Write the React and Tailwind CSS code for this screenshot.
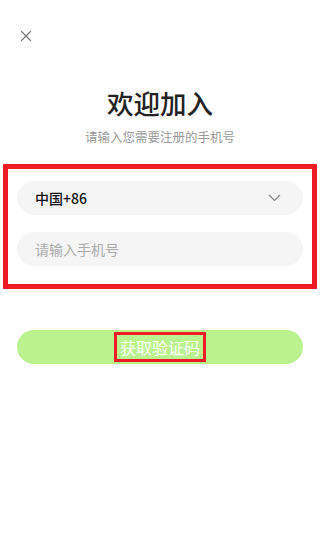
import React from 'react';

export default function App() {
    return (
        <div
            className="w-[320px] h-[551px] bg-white overflow-hidden"
            style={{ fontFamily: '"Noto Sans CJK SC", "Noto Sans", sans-serif' }}
        >
            {/* Tombol tutup */}
            <div className="pt-[30px] pl-[20px] h-[85px]">
                <svg width="12" height="12" viewBox="0 0 12 12" className="block">
                    <path d="M1.5 1.5 L10.5 10.5 M10.5 1.5 L1.5 10.5" stroke="#7a7a7a" strokeWidth="1.3" strokeLinecap="round" />
                </svg>
            </div>

            <div className="text-center">
                <h1 className="text-[26.5px] leading-[36px] font-medium text-[#222]">欢迎加入</h1>
                <p className="mt-[8px] text-[12.5px] leading-[16px] text-[#9a9a9a]">请输入您需要注册的手机号</p>
            </div>

            {/* Kotak input */}
            <div className="mt-[19px] mx-[3px] border-[5px] border-[#ee1c24] px-[9px] pt-[12px] pb-[18px] flex flex-col gap-[17px]">
                <div className="h-[34px] rounded-full bg-[#f5f5f5] flex items-center justify-between pl-[18px] pr-[22px]">
                    <span className="text-[14px] font-medium text-[#111]">中国+86</span>
                    <svg width="13" height="8" viewBox="0 0 13 8">
                        <path d="M1 1 L6.5 6.5 L12 1" fill="none" stroke="#888" strokeWidth="1.2" />
                    </svg>
                </div>
                <div className="h-[34px] rounded-full bg-[#f5f5f5] flex items-center pl-[18px]">
                    <span className="text-[14px] text-[#aaa]">请输入手机号</span>
                </div>
            </div>

            <div className="mt-[41px] mx-[17px] h-[34px] rounded-full bg-[#bbf290] flex items-center justify-center">
                <span className="border-[3px] border-[#ee1c24] px-[3px] h-[30px] flex items-center text-[16px] text-white">获取验证码</span>
            </div>
        </div>
    );
}
